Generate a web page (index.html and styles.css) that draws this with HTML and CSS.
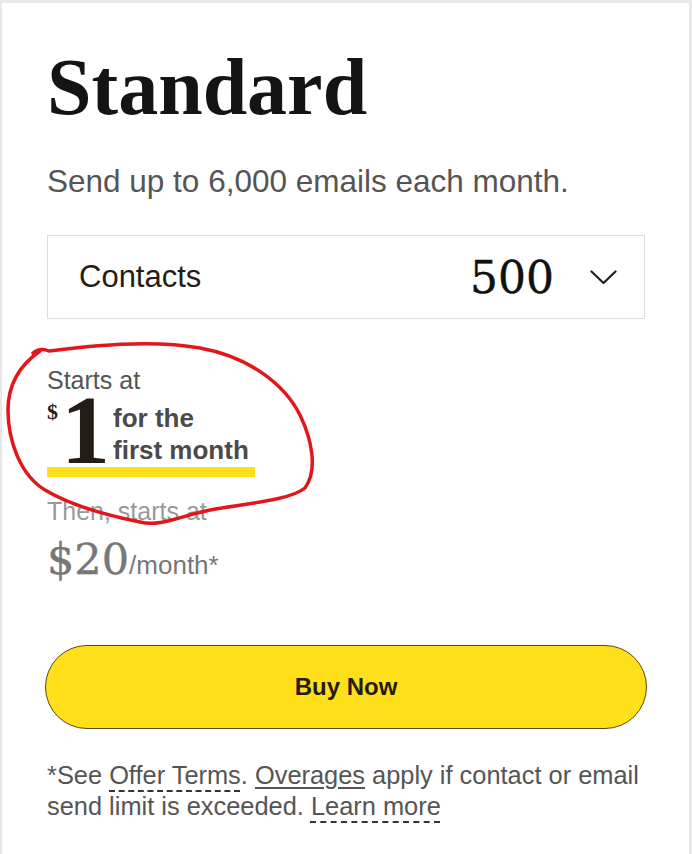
FILE: index.html
```html
<!DOCTYPE html>
<html lang="en">
<head>
<meta charset="utf-8">
<title>Standard plan</title>
<link rel="stylesheet" href="styles.css">
</head>
<body>
<div class="page">
  <div class="card">
    <h1 class="title">Standard</h1>
    <p class="subtitle">Send up to 6,000 emails each month.</p>
    <div class="select">
      <span class="select-label">Contacts</span>
      <span class="select-value">500</span>
      <svg class="chevron" width="27" height="15" viewBox="0 0 27 15" aria-hidden="true"><polyline points="1.5,1.5 13.5,13 25.5,1.5" fill="none" stroke="#241c15" stroke-width="2.2" stroke-linecap="round" stroke-linejoin="round"/></svg>
    </div>
    <div class="starts">Starts at</div>
    <div class="promo">
      <span class="promo-currency">$</span>
      <span class="promo-amount">1</span>
      <span class="promo-text">for the<br>first month</span>
    </div>
    <div class="highlight"></div>
    <div class="then">Then, starts at</div>
    <div class="regular">
      <span class="regular-amount">$20</span><span class="regular-unit">/month*</span>
    </div>
    <button class="buy">Buy Now</button>
    <p class="terms">*See <span class="dashed">Offer Terms</span>. <span class="solid">Overages</span> apply if contact or email<br>send limit is exceeded. <span class="dashed">Learn more</span></p>
  </div>
  <svg class="annotation" width="692" height="854" viewBox="0 0 692 854" aria-hidden="true">
    <path d="M33,353 Q40,347 49,351 C90,346 150,339 200,348 C250,357 285,385 300,415 C312,440 318,470 305,488 C290,500 250,503 210,510 C180,516 160,527 140,522 C110,516 70,505 45,490 C20,475 8,440 8,410 C8,385 20,365 40,351" fill="none" stroke="#e3161c" stroke-width="3.5" stroke-linecap="round" stroke-linejoin="round"/>
  </svg>
</div>
</body>
</html>
```
FILE: styles.css
```css
html, body {
  margin: 0;
  padding: 0;
}
body {
  background: #e8e8e8;
  font-family: "Liberation Sans", Arial, sans-serif;
}
.page {
  position: relative;
  width: 692px;
  height: 854px;
  overflow: hidden;
}
.card {
  margin: 3px 3px 0 2px;
  height: 851px;
  background: #fff;
  padding: 43px 44px 0 45px;
  box-sizing: border-box;
}
.title {
  margin: 0;
  font-family: "Liberation Serif", "Times New Roman", serif;
  font-weight: 700;
  font-size: 80px;
  line-height: 82px;
  letter-spacing: 0;
  color: #141414;
}
.subtitle {
  margin: 35px 0 0;
  font-size: 31.5px;
  line-height: 36px;
  color: #555;
}
.select {
  margin-top: 36px;
  height: 84px;
  box-sizing: border-box;
  border: 1px solid #dcdcdc;
  display: flex;
  align-items: center;
  padding: 0 27px 0 31px;
}
.select-label {
  flex: 1;
  font-size: 31px;
  color: #241c15;
}
.select-value {
  font-family: "DejaVu Serif", serif;
  font-size: 44px;
  color: #111;
  margin-right: 36px;
  -webkit-text-stroke: 0.4px #111;
}
.chevron {
  display: block;
}
.starts {
  margin-top: 46px;
  font-size: 25px;
  line-height: 30px;
  color: #555;
}
.promo {
  display: flex;
  align-items: flex-start;
}
.promo-currency {
  margin-top: 6px;
  font-family: "Liberation Serif", serif;
  font-weight: 700;
  font-size: 22px;
  line-height: 22px;
  color: #241c15;
}
.promo-amount {
  margin-left: 3px;
  font-family: "Liberation Serif", serif;
  font-weight: 700;
  font-size: 98px;
  line-height: 70px;
  color: #241c15;
}
.promo-text {
  margin: 7px 0 0 3px;
  font-size: 26px;
  line-height: 32px;
  font-weight: 700;
  color: #4a4a4a;
}
.highlight {
  margin-top: 1px;
  width: 208px;
  height: 10px;
  background: #ffe01b;
}
.then {
  margin-top: 19px;
  font-size: 25px;
  line-height: 30px;
  color: #999;
}
.regular {
  margin-top: 11px;
  display: flex;
  align-items: baseline;
  color: #777;
}
.regular-amount {
  font-family: "DejaVu Serif", serif;
  font-size: 43px;
  line-height: 44px;
  -webkit-text-stroke: 0.4px #777;
}
.regular-unit {
  font-size: 26px;
}
.buy {
  display: block;
  margin: 64px -2px 0;
  width: calc(100% + 4px);
  height: 84px;
  border-radius: 42px;
  border: 1.5px solid #5b4a0c;
  background: #ffe01b;
  font-family: "Liberation Sans", Arial, sans-serif;
  font-weight: 700;
  font-size: 24px;
  color: #241c15;
}
.terms {
  margin: 31px 0 0;
  font-size: 25.4px;
  line-height: 31px;
  color: #555;
}
.terms .dashed {
  text-decoration: underline dashed #333;
  text-decoration-thickness: 1.5px;
  text-underline-offset: 6px;
}
.terms .solid {
  text-decoration: underline;
  text-underline-offset: 3px;
}
.annotation {
  position: absolute;
  left: 0;
  top: 0;
  pointer-events: none;
}
```
